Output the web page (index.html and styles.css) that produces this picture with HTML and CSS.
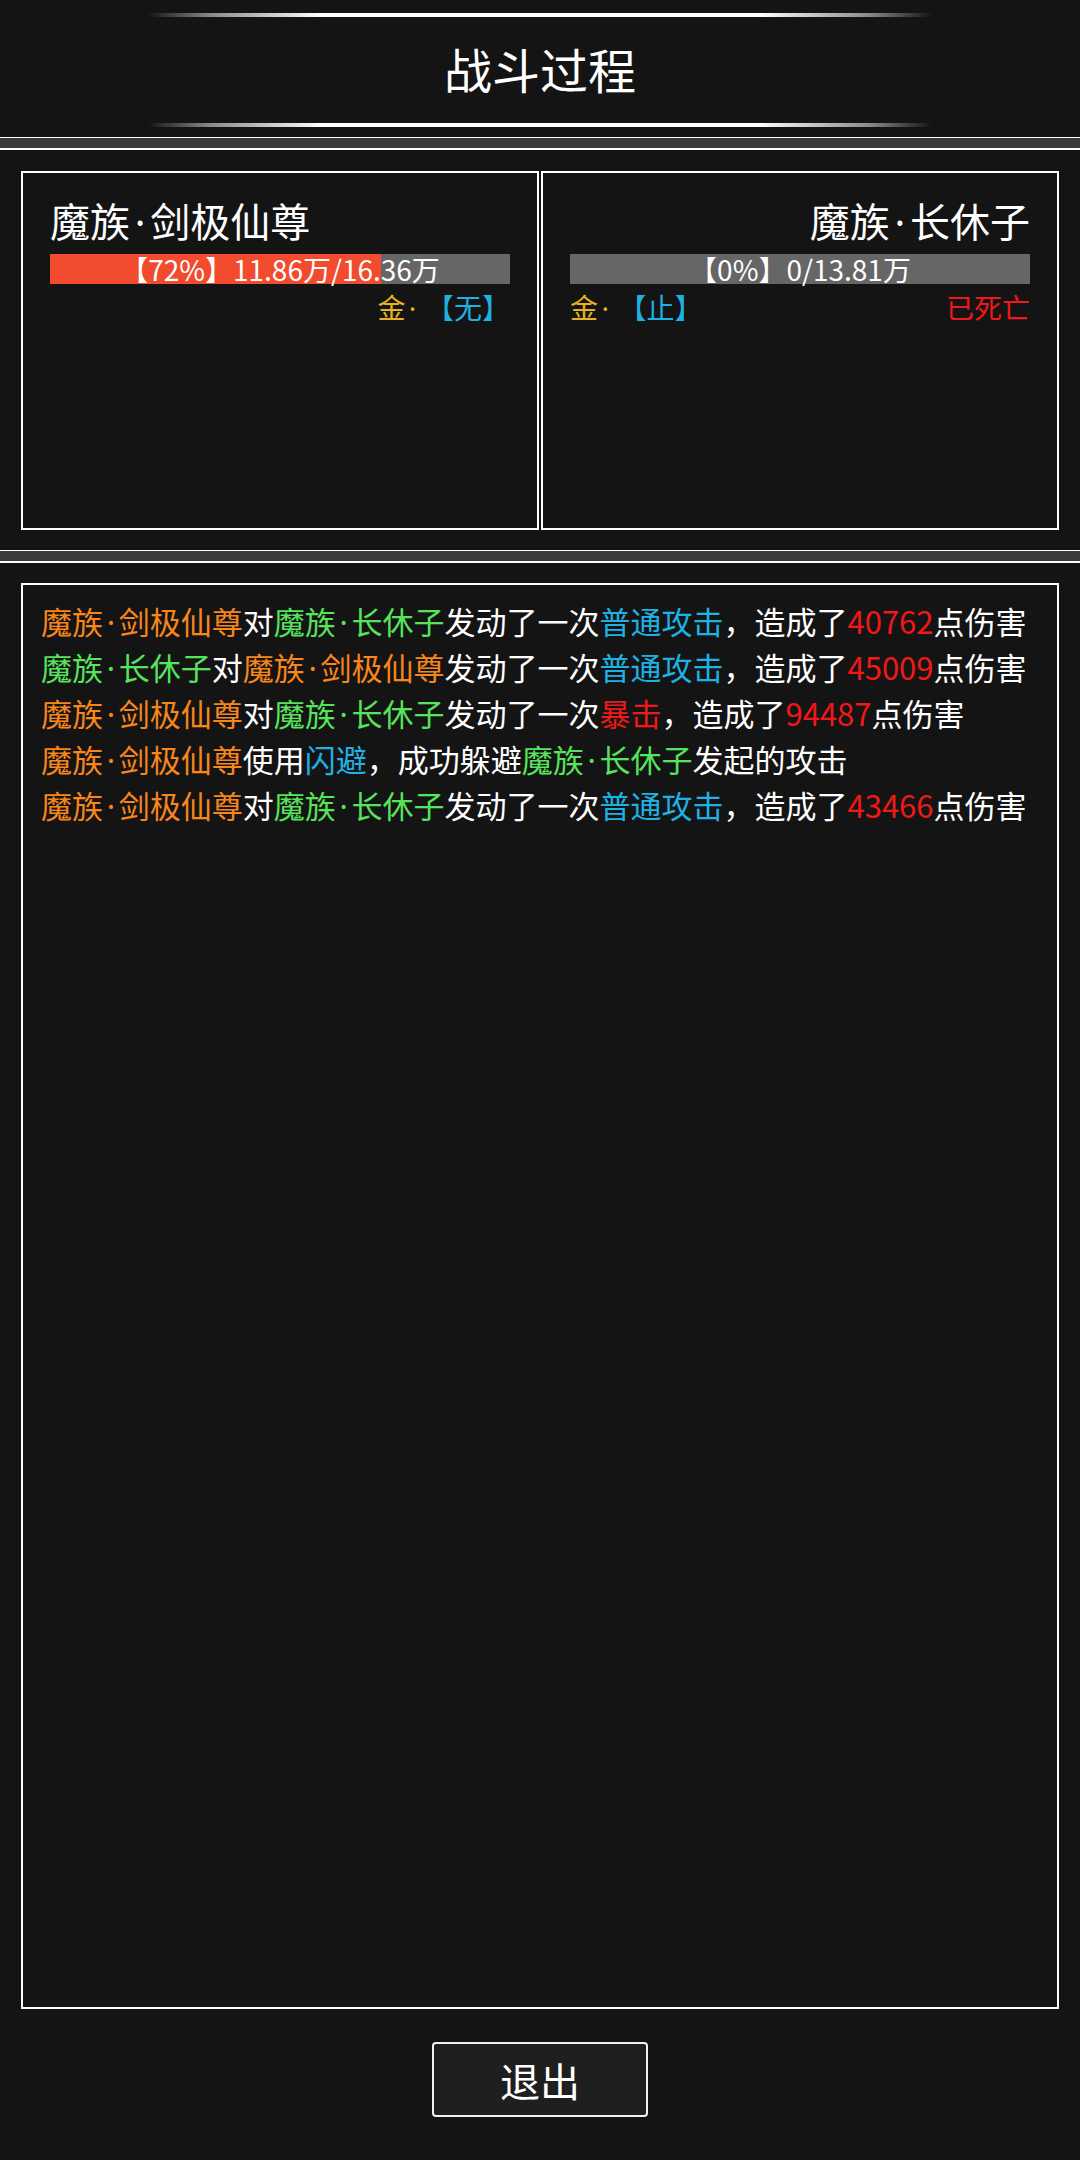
FILE: index.html
```html
<!DOCTYPE html>
<html lang="zh-CN">
<head>
    <meta charset="UTF-8">
    <meta name="viewport" content="width=device-width, initial-scale=1.0">
    <title>战斗过程</title>
    <link rel="stylesheet" href="styles.css">
</head>
<body>
    <header class="title-bar">
        <div class="glow-line"></div>
        <h1>战斗过程</h1>
        <div class="glow-line"></div>
    </header>

    <div class="divider"></div>

    <section class="fighters">
        <div class="fighter">
            <div class="fighter-name">魔族<span class="dot">·</span>剑极仙尊</div>
            <div class="hp-bar">
                <div class="hp-fill" style="width: 72%;"></div>
                <span class="hp-text">【72%】11.86万/16.36万</span>
            </div>
            <div class="fighter-info info-right">
                <span><span class="gold">金<span class="dot">·</span> </span><span class="cyan">【无】</span></span>
            </div>
        </div>

        <div class="fighter fighter-right">
            <div class="fighter-name">魔族<span class="dot">·</span>长休子</div>
            <div class="hp-bar">
                <div class="hp-fill" style="width: 0%;"></div>
                <span class="hp-text">【0%】0/13.81万</span>
            </div>
            <div class="fighter-info">
                <span><span class="gold">金<span class="dot">·</span> </span><span class="cyan">【止】</span></span>
                <span class="red">已死亡</span>
            </div>
        </div>
    </section>

    <div class="divider"></div>

    <section class="battle">
        <div class="battle-log">
            <p><span class="orange">魔族<span class="dot">·</span>剑极仙尊</span>对<span class="green">魔族<span class="dot">·</span>长休子</span>发动了一次<span class="cyan">普通攻击</span>，造成了<span class="red">40762</span>点伤害</p>
            <p><span class="green">魔族<span class="dot">·</span>长休子</span>对<span class="orange">魔族<span class="dot">·</span>剑极仙尊</span>发动了一次<span class="cyan">普通攻击</span>，造成了<span class="red">45009</span>点伤害</p>
            <p><span class="orange">魔族<span class="dot">·</span>剑极仙尊</span>对<span class="green">魔族<span class="dot">·</span>长休子</span>发动了一次<span class="red">暴击</span>，造成了<span class="red">94487</span>点伤害</p>
            <p><span class="orange">魔族<span class="dot">·</span>剑极仙尊</span>使用<span class="cyan">闪避</span>，成功躲避<span class="green">魔族<span class="dot">·</span>长休子</span>发起的攻击</p>
            <p><span class="orange">魔族<span class="dot">·</span>剑极仙尊</span>对<span class="green">魔族<span class="dot">·</span>长休子</span>发动了一次<span class="cyan">普通攻击</span>，造成了<span class="red">43466</span>点伤害</p>
        </div>
        <button class="exit-btn" type="button">退出</button>
    </section>
</body>
</html>
```

FILE: styles.css
```css
body {
    margin: 0;
    background-color: #141414;
    color: #fff;
    font-family: "Noto Sans CJK SC", "Noto Sans", sans-serif;
}
/* narrow middle dot between clan and name */
.dot {
    font-family: "Noto Sans", "Open Sans", sans-serif;
    line-height: 1;
    margin: 0 0.12em;
}
.title-bar {
    height: 137px;
    box-sizing: border-box;
    padding-top: 13px;
    display: flex;
    flex-direction: column;
    align-items: center;
}
.title-bar h1 {
    margin: 0;
    font-size: 48px;
    font-weight: 400;
    line-height: 102px;
    height: 106px;
}
.glow-line {
    width: 784px;
    height: 4px;
    background: linear-gradient(to right, rgba(255,255,255,0) 0%, rgba(255,255,255,0.5) 8%, #fff 22%, #fff 78%, rgba(255,255,255,0.5) 92%, rgba(255,255,255,0) 100%);
    border-radius: 2px;
}
.divider {
    height: 10px;
    background-color: #3a3a3a;
    border-top: 1px solid #fff;
    border-bottom: 2px solid #fff;
}
.fighters {
    display: grid;
    grid-template-columns: 518px 518px;
    gap: 2px;
    padding: 21px 21px 20px;
}
.fighter {
    height: 359px;
    box-sizing: border-box;
    border: 2px solid #fff;
    padding: 19px 27px 0;
}
.fighter-name {
    font-size: 40px;
    line-height: 56px;
}
.fighter-right .fighter-name {
    text-align: right;
}
.hp-bar {
    position: relative;
    height: 30px;
    margin-top: 6px;
    background-color: #666;
    text-align: center;
}
.hp-fill {
    position: absolute;
    left: 0;
    top: 0;
    bottom: 0;
    background-color: #f24b2e;
}
.hp-text {
    position: relative;
    font-size: 28px;
    line-height: 30px;
    white-space: nowrap;
}
.fighter-info {
    margin-top: 5px;
    display: flex;
    justify-content: space-between;
    font-size: 28px;
    line-height: 36px;
}
.info-right {
    justify-content: flex-end;
}
.battle {
    display: flex;
    flex-direction: column;
    align-items: center;
    padding: 20px 21px 43px;
}
.battle-log {
    width: 100%;
    height: 1426px;
    box-sizing: border-box;
    border: 2px solid #fff;
    padding: 13px 18px;
}
.battle-log p {
    margin: 0;
    font-size: 31px;
    line-height: 46px;
    white-space: nowrap;
}
.exit-btn {
    margin-top: 33px;
    width: 216px;
    height: 75px;
    background-color: #1f1f1f;
    color: #fff;
    border: 2px solid #f0f0f0;
    border-radius: 4px;
    font-family: "Noto Sans CJK SC", sans-serif;
    font-size: 40px;
    padding: 0;
    cursor: pointer;
}
.orange {
    color: #f7861b;
}
.green {
    color: #58e35c;
}
.cyan {
    color: #1fb1e3;
}
.red {
    color: #f01818;
}
.gold {
    color: #e6b422;
}
```
